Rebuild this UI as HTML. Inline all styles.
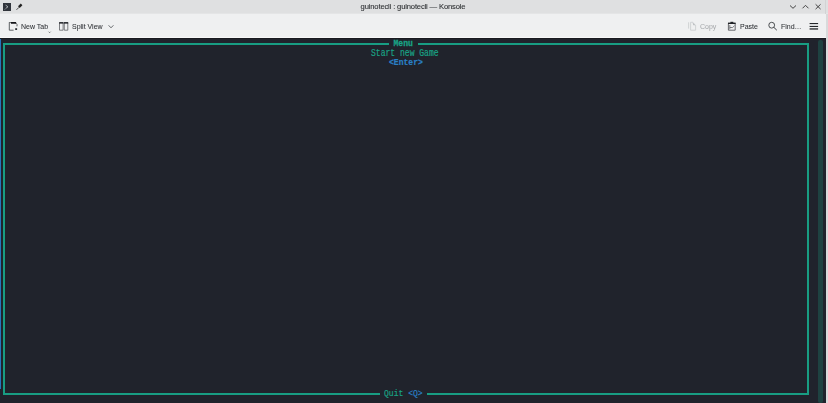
<!DOCTYPE html>
<html><head><meta charset="utf-8">
<style>
html,body{margin:0;padding:0;width:828px;height:403px;overflow:hidden;background:#20232c;}
*{box-sizing:border-box;}
.abs{position:absolute;}
#title{left:0;top:0;width:828px;height:14px;background:#dfe0e1;}
#ttext{left:-1px;top:0;width:828px;height:13px;text-align:center;font:7.6px/13px "Liberation Sans",sans-serif;letter-spacing:-0.15px;color:#2e3033;will-change:transform;-webkit-text-stroke:0.1px currentColor;}
#tool{left:0;top:14px;width:828px;height:24px;background:#eff0f1;}
.tl{font:7px/10px "Liberation Sans",sans-serif;color:#2f3236;-webkit-text-stroke:0.06px currentColor;white-space:nowrap;will-change:transform;}
#term{left:0;top:38px;width:826px;height:365px;background:#20232c;}
#rstrip{left:826px;top:14px;width:2px;height:389px;background:#d9dadb;}
#rline{left:825px;top:0;width:1px;height:14px;background:#d2d3d4;}
#bluebar{left:0;top:39px;width:1px;height:350px;background:#2577bb;}
#box{left:3px;top:43px;width:806px;height:352px;border:2px solid #189d83;}
#sb{left:818px;top:40px;width:5px;height:363px;background:#1e4241;border-radius:2px;}
.mono{font-family:"Liberation Mono",monospace;font-size:8.05px;line-height:9px;height:9px;white-space:pre;letter-spacing:0px;transform:scaleY(1.2);-webkit-text-stroke:0.15px currentColor;transform-origin:0 0;}
.teal{color:#19a386;}
.blue{color:#2a80c6;}
.mask{background:#20232c;}
</style></head><body>
<div id="title" class="abs"></div>
<div id="ttext" class="abs">guinotecli : guinotecli — Konsole</div>
<!-- title bar icons -->
<svg class="abs" style="left:0;top:0" width="30" height="13" viewBox="0 0 30 13">
  <rect x="3" y="3" width="8" height="8" fill="#30343b"/>
  <path d="M5.6 5.1 L8 6.8 L5.6 8.5" stroke="#b4b8bc" stroke-width="0.9" fill="none"/>
  <path d="M4 9.4 H5.4" stroke="#7c8086" stroke-width="0.6"/>
  <line x1="16.5" y1="9.8" x2="19" y2="7.3" stroke="#222" stroke-width="0.8"/>
  <path d="M18 6.3 L20.8 3.6 L22.4 5.2 L19.7 8 Z" fill="#222"/>
</svg>
<svg class="abs" style="left:780px;top:0" width="48" height="13" viewBox="0 0 48 13">
  <path d="M10 5.5 L13 8.3 L16 5.5" stroke="#444" stroke-width="1" fill="none"/>
  <path d="M22.5 8.3 L25.5 5.3 L28.5 8.3" stroke="#444" stroke-width="1" fill="none"/>
  <path d="M35.6 4.3 L40.6 9.1 M40.6 4.3 L35.6 9.1" stroke="#444" stroke-width="1" fill="none"/>
</svg>
<div id="tool" class="abs"></div>
<div class="abs" style="left:0;top:13px;width:828px;height:1px;background:#e4e5e6"></div>
<div class="abs" style="left:0;top:37px;width:828px;height:1px;background:#f8f8f9"></div>
<div id="rstrip" class="abs"></div>
<div id="rline" class="abs"></div>
<div id="term" class="abs"></div>
<div class="abs" style="left:0;top:38px;width:826px;height:1px;background:#191a20"></div>
<div id="bluebar" class="abs"></div>
<div id="box" class="abs"></div>
<div id="sb" class="abs"></div>
<!-- toolbar -->
<svg class="abs" style="left:0;top:13px" width="828" height="25" viewBox="0 13 828 25">
  <!-- new tab icon -->
  <g fill="none" stroke="#3a3d41" stroke-width="0.8">
    <path d="M9.3 22.3 V30.2 H13.6"/>
    <path d="M9.3 22.6 H11.3"/>
    <path d="M16 23.4 L17 24.4 V26.3"/>
  </g>
  <path d="M11 22 H15.9 L16.6 23.8 H11 Z" fill="#141518"/>
  <rect x="15.2" y="28.2" width="1.9" height="1.8" fill="#2f3236"/>
  <path d="M48.6 31.7 L49.6 32.7 L50.6 31.7" stroke="#44474b" stroke-width="0.7" fill="none"/>
  <!-- split view icon -->
  <g fill="none" stroke="#55585c" stroke-width="0.75">
    <path d="M59.5 23 V30.2 H63.1 V23"/>
    <path d="M64.3 23 V30.2 H67.8 V23"/>
  </g>
  <rect x="59.1" y="22.1" width="4.4" height="1.5" fill="#1f2125"/>
  <rect x="63.9" y="22.1" width="4.3" height="1.5" fill="#1f2125"/>
  <path d="M108.6 25.3 L111 27.8 L113.4 25.3" stroke="#3a3d41" stroke-width="0.75" fill="none"/>
  <!-- copy icon (disabled) -->
  <g fill="none" stroke="#c3c5c8" stroke-width="0.7">
    <path d="M688.6 22.3 V28.6"/>
    <path d="M690.6 30.2 V22.3 H692.6 L695.6 25.2 V30.2 Z"/>
  </g>
  <path d="M692.3 22.3 L695.3 25.3 H693.5 Z" fill="#b5b7ba"/>
  <!-- paste icon -->
  <g fill="none" stroke="#45484c" stroke-width="0.8">
    <path d="M728.4 23.2 V30.2 H735.2 V23.2"/>
  </g>
  <path d="M729.8 25 V29.3 M729.8 27.5 H732.6 L734.5 25.7" fill="none" stroke="#55585c" stroke-width="0.75"/>
  <rect x="728" y="22.6" width="7.6" height="1.4" fill="#1f2125"/>
  <rect x="730.4" y="21.8" width="2.9" height="1.2" fill="#1f2125"/>
  <!-- find icon -->
  <circle cx="771.7" cy="25.2" r="2.9" fill="none" stroke="#3a3d41" stroke-width="0.9"/>
  <path d="M773.8 27.3 L776.8 30.2" stroke="#3a3d41" stroke-width="1"/>
  <!-- hamburger -->
  <rect x="809.6" y="23" width="8.5" height="1.1" fill="#232629"/>
  <rect x="809.6" y="25.9" width="8.5" height="1.1" fill="#232629"/>
  <rect x="809.6" y="28.3" width="8.5" height="1.3" fill="#232629"/>
</svg>
<div class="abs tl" style="left:21px;top:21.5px">New Tab</div>
<div class="abs tl" style="left:71.5px;top:21.5px">Split View</div>
<div class="abs tl" style="left:700px;top:21.5px;color:#a9abae">Copy</div>
<div class="abs tl" style="left:740px;top:21.5px">Paste</div>
<div class="abs tl" style="left:781px;top:21.5px">Find…</div>
<!-- terminal text -->
<div class="abs mask" style="left:389px;top:42px;width:29px;height:4px"></div>
<div class="abs mono teal" style="left:393.5px;top:37.9px;font-weight:bold;-webkit-text-stroke:0.25px currentColor">Menu</div>
<div class="abs mono teal" style="left:371px;top:47.2px;transform:scaleY(1.27)">Start new Game</div>
<div class="abs mono blue" style="left:389px;top:56.9px;font-weight:bold;-webkit-text-stroke:0.2px currentColor">&lt;Enter&gt;</div>
<div class="abs mask" style="left:380px;top:392px;width:47px;height:4px"></div>
<div class="abs mono" style="left:384px;top:387.8px"><span class="teal">Quit</span> <span class="blue">&lt;Q&gt;</span></div>
</body></html>
